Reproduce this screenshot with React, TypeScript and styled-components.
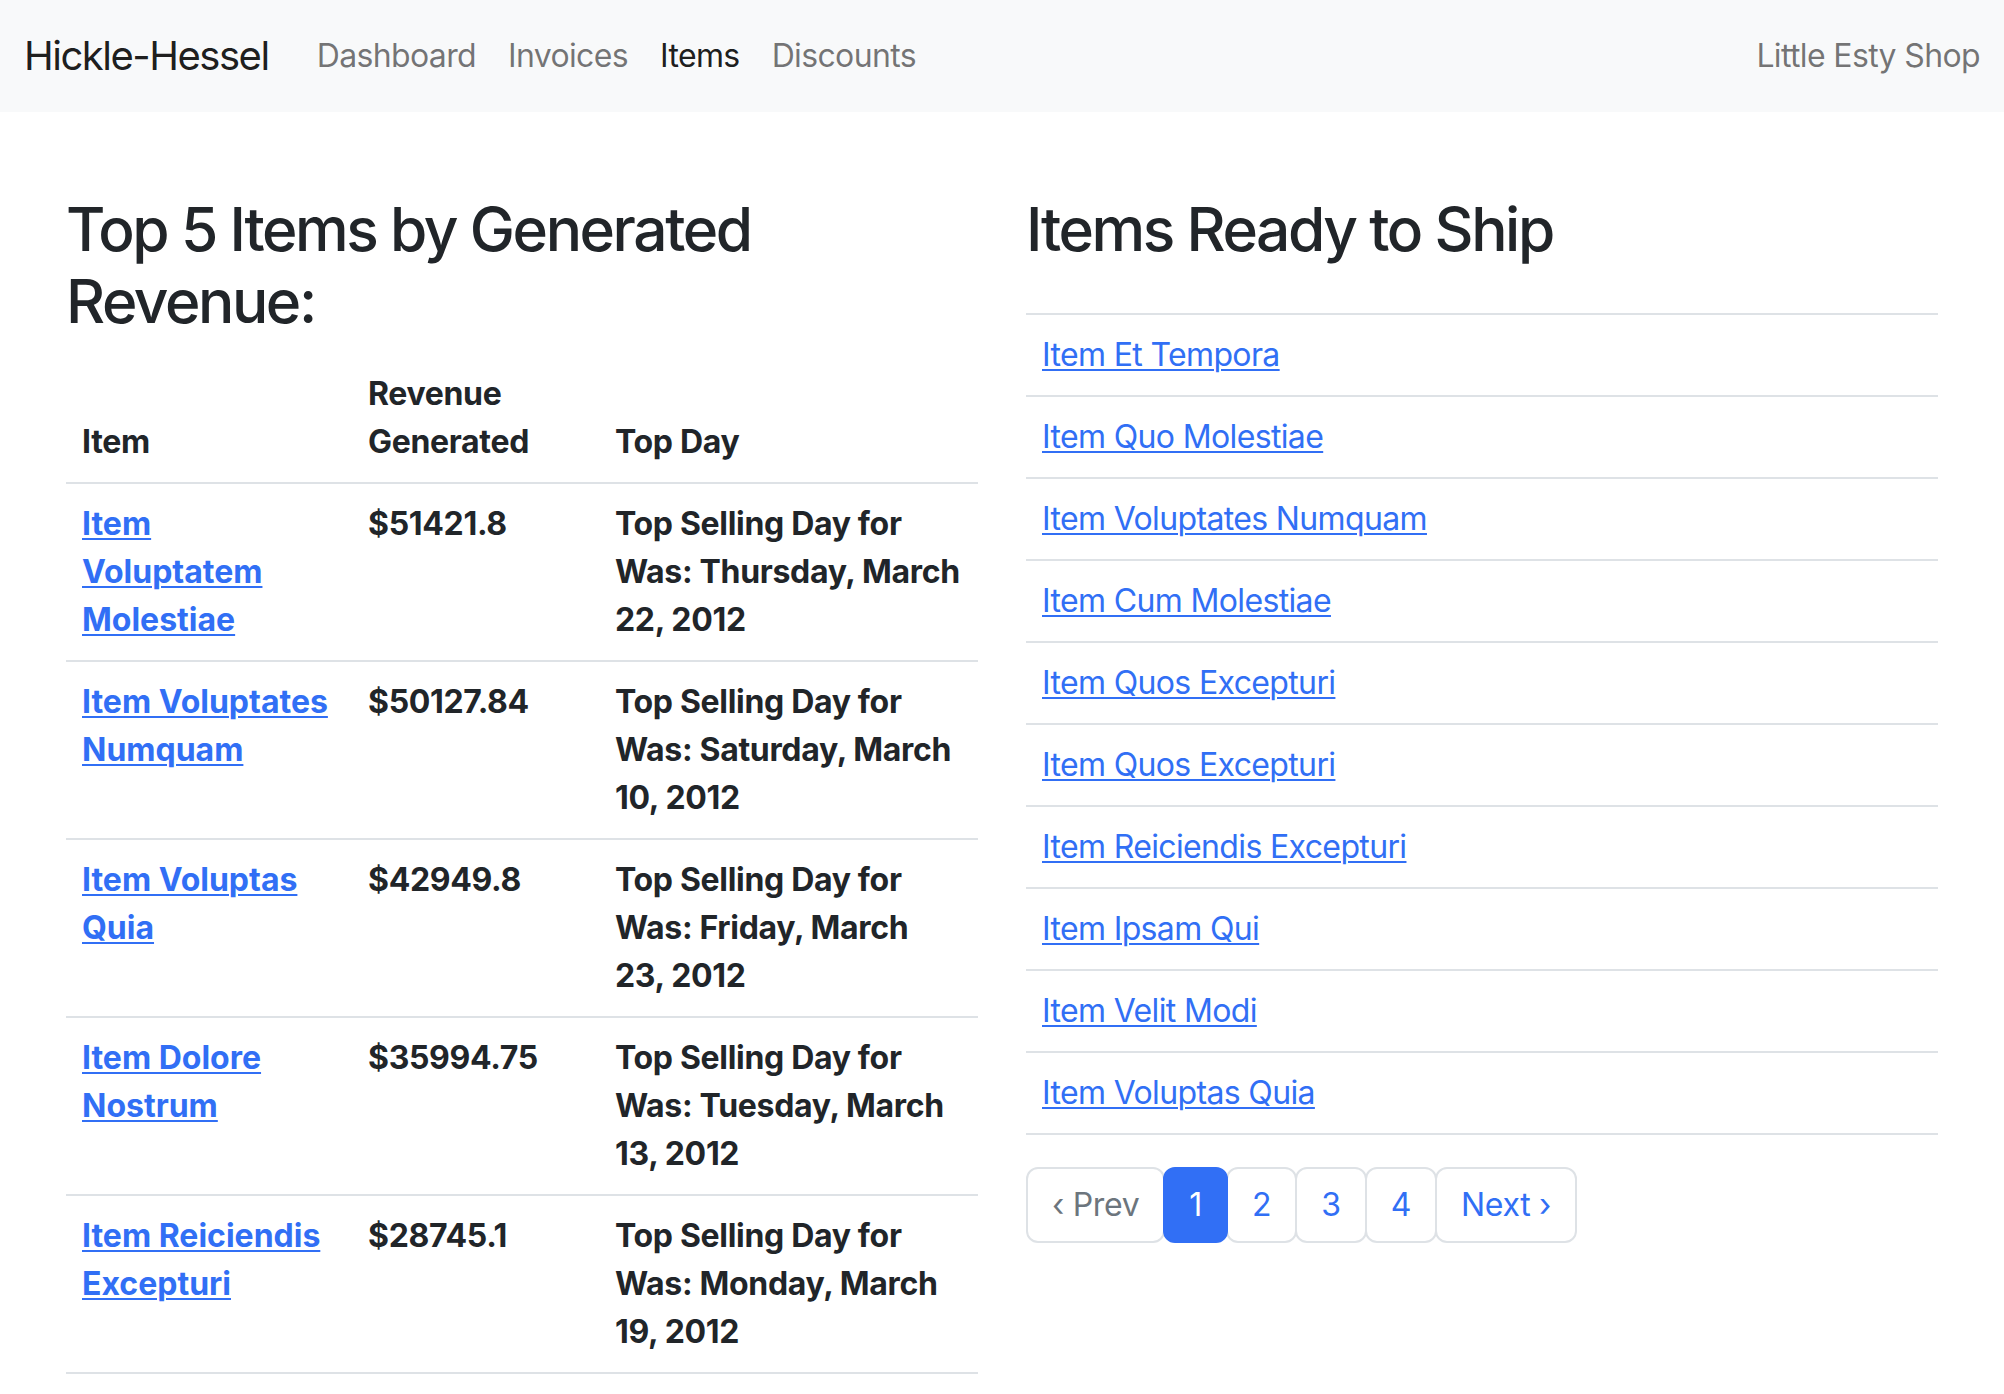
import React from 'react';
import styled, { createGlobalStyle } from 'styled-components';

const GlobalStyle = createGlobalStyle`
  body {
    margin: 0;
    font-family: Inter, "Liberation Sans", sans-serif;
    font-size: 32px;
    line-height: 1.5;
    letter-spacing: -0.02em;
    color: #212529;
    background: #fff;
  }
`;

const topItems = [
  { name: 'Item Voluptatem Molestiae', revenue: '$51421.8', day: 'Thursday, March 22, 2012' },
  { name: 'Item Voluptates Numquam', revenue: '$50127.84', day: 'Saturday, March 10, 2012' },
  { name: 'Item Voluptas Quia', revenue: '$42949.8', day: 'Friday, March 23, 2012' },
  { name: 'Item Dolore Nostrum', revenue: '$35994.75', day: 'Tuesday, March 13, 2012' },
  { name: 'Item Reiciendis Excepturi', revenue: '$28745.1', day: 'Monday, March 19, 2012' },
];

const readyItems = [
  'Item Et Tempora',
  'Item Quo Molestiae',
  'Item Voluptates Numquam',
  'Item Cum Molestiae',
  'Item Quos Excepturi',
  'Item Quos Excepturi',
  'Item Reiciendis Excepturi',
  'Item Ipsam Qui',
  'Item Velit Modi',
  'Item Voluptas Quia',
];

const Navbar = styled.nav`
  height: 112px;
  background: #f8f9fa;
  display: flex;
  align-items: center;
  padding: 0 24px;
`;

const Brand = styled.a`
  font-size: 40px;
  letter-spacing: -0.037em;
  color: rgba(0, 0, 0, 0.9);
  text-decoration: none;
  margin-right: 32px;
  line-height: 1.5;
`;

const NavLinks = styled.div`
  display: flex;
  flex: 1;
`;

const NavLink = styled.a<{ $active?: boolean }>`
  padding: 0 16px;
  color: ${(p) => (p.$active ? 'rgba(0, 0, 0, 0.9)' : 'rgba(0, 0, 0, 0.55)')};
  text-decoration: none;
`;

const ShopName = styled.span`
  color: rgba(0, 0, 0, 0.55);
`;

const Container = styled.main`
  width: 1920px;
  margin: 0 auto;
  padding-top: 81px;
  display: grid;
  grid-template-columns: 1fr 1fr;
`;

const Column = styled.section`
  padding: 0 24px;
`;

const Heading = styled.h2`
  font-size: 60.4px;
  font-weight: 500;
  letter-spacing: -0.04em;
  line-height: 1.2;
  margin: 0 0 16px;
`;

const Table = styled.table`
  width: 100%;
  border-collapse: collapse;
  table-layout: fixed;
  margin-bottom: 32px;
`;

const Cell = styled.td<{ $w?: number; $wide?: boolean }>`
  ${(p) => (p.$w ? `width: ${p.$w}px;` : '')}
  padding: 16px;
  border-bottom: 2px solid #dee2e6;
  vertical-align: top;
  text-align: left;
  font-weight: 700;
  letter-spacing: ${(p) => (p.$wide ? '0' : '-0.01em')};
`;

const HeadCell = styled(Cell).attrs({ as: 'th' })`
  vertical-align: bottom;
`;

const EmptyHead = styled.th`
  padding: 16px;
  border-bottom: 2px solid #dee2e6;
`;

const ListCell = styled.td`
  padding: 16px;
  border-bottom: 2px solid #dee2e6;
`;

const ItemLink = styled.a`
  color: #316ff5;
  text-decoration: underline;
  text-decoration-thickness: 2px;
  text-underline-offset: 3px;
`;

const Pagination = styled.ul`
  display: flex;
  list-style: none;
  margin: 0;
  padding: 0;
`;

const PageItem = styled.li<{ $active?: boolean; $disabled?: boolean }>`
  padding: 12px 24px;
  border: 2px solid ${(p) => (p.$active ? '#316ff5' : '#dee2e6')};
  border-radius: 12px;
  margin-left: -2px;
  letter-spacing: -0.01em;
  background: ${(p) => (p.$active ? '#316ff5' : '#fff')};
  color: ${(p) => (p.$active ? '#fff' : p.$disabled ? '#6c757d' : '#316ff5')};
  position: relative;
  z-index: ${(p) => (p.$active ? 1 : 0)};
  &:first-child {
    margin-left: 0;
  }
`;

export default function App() {
  return (
    <>
      <GlobalStyle />
      <Navbar>
        <Brand href="#">Hickle-Hessel</Brand>
        <NavLinks>
          <NavLink href="#">Dashboard</NavLink>
          <NavLink href="#">Invoices</NavLink>
          <NavLink href="#" $active>Items</NavLink>
          <NavLink href="#">Discounts</NavLink>
        </NavLinks>
        <ShopName>Little Esty Shop</ShopName>
      </Navbar>
      <Container>
        <Column>
          <Heading>Top 5 Items by Generated Revenue:</Heading>
          <Table>
            <thead>
              <tr>
                <HeadCell $w={254}>Item</HeadCell>
                <HeadCell $w={215}>Revenue Generated</HeadCell>
                <HeadCell>Top Day</HeadCell>
              </tr>
            </thead>
            <tbody>
              {topItems.map((x) => (
                <tr key={x.name}>
                  <Cell $wide><ItemLink href="#">{x.name}</ItemLink></Cell>
                  <Cell>{x.revenue}</Cell>
                  <Cell>Top Selling Day for Was: {x.day}</Cell>
                </tr>
              ))}
            </tbody>
          </Table>
        </Column>
        <Column>
          <Heading>Items Ready to Ship</Heading>
          <Table>
            <thead>
              <tr><EmptyHead /></tr>
            </thead>
            <tbody>
              {readyItems.map((name, i) => (
                <tr key={i}>
                  <ListCell><ItemLink href="#">{name}</ItemLink></ListCell>
                </tr>
              ))}
            </tbody>
          </Table>
          <Pagination>
            <PageItem $disabled>‹ Prev</PageItem>
            <PageItem $active>1</PageItem>
            <PageItem>2</PageItem>
            <PageItem>3</PageItem>
            <PageItem>4</PageItem>
            <PageItem>Next ›</PageItem>
          </Pagination>
        </Column>
      </Container>
    </>
  );
}
